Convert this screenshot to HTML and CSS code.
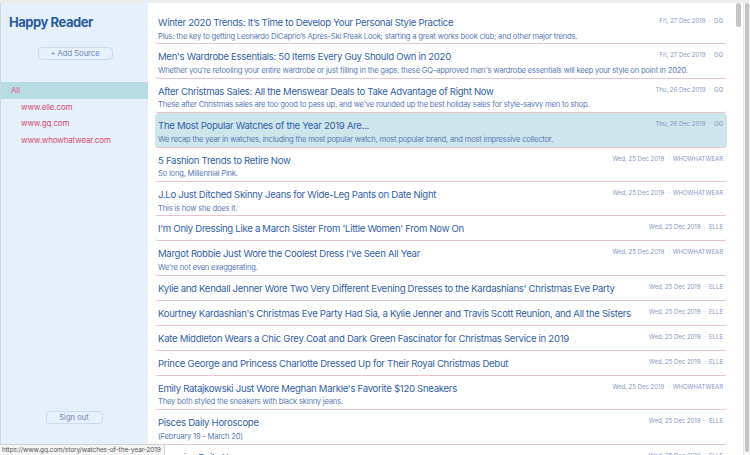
FILE: index.html
```html
<!DOCTYPE html>
<html>
<head>
<meta charset="utf-8">
<link rel="stylesheet" href="styles.css">
</head>
<body>
<div class="app">
  <aside class="sidebar">
    <h1 class="brand">Happy Reader</h1>
    <button class="btn add">+ Add Source</button>
    <ul class="sources">
      <li class="src all active">All</li>
      <li class="src">www.elle.com</li>
      <li class="src">www.gq.com</li>
      <li class="src">www.whowhatwear.com</li>
    </ul>
    <div class="spacer"></div>
    <button class="btn signout">Sign out</button>
  </aside>
  <main class="list">
    <div class="item"><div class="txt"><div class="title">Winter 2020 Trends: It’s Time to Develop Your Personal Style Practice</div><div class="desc">Plus: the key to getting Leonardo DiCaprio’s Après-Ski Freak Look; starting a great works book club; and other major trends.</div></div><div class="meta">Fri, 27 Dec 2019 &nbsp;·&nbsp; GQ</div></div>
    <div class="item"><div class="txt"><div class="title">Men's Wardrobe Essentials: 50 Items Every Guy Should Own in 2020</div><div class="desc">Whether you're retooling your entire wardrobe or just filling in the gaps, these GQ-approved men's wardrobe essentials will keep your style on point in 2020.</div></div><div class="meta">Fri, 27 Dec 2019 &nbsp;·&nbsp; GQ</div></div>
    <div class="item"><div class="txt"><div class="title">After Christmas Sales: All the Menswear Deals to Take Advantage of Right Now</div><div class="desc">These after Christmas sales are too good to pass up, and we've rounded up the best holiday sales for style-savvy men to shop.</div></div><div class="meta">Thu, 26 Dec 2019 &nbsp;·&nbsp; GQ</div></div>
    <div class="item selected"><div class="txt"><div class="title">The Most Popular Watches of the Year 2019 Are...</div><div class="desc">We recap the year in watches, including the most popular watch, most popular brand, and most impressive collector.</div></div><div class="meta">Thu, 26 Dec 2019 &nbsp;·&nbsp; GQ</div></div>
    <div class="item"><div class="txt"><div class="title">5 Fashion Trends to Retire Now</div><div class="desc">So long, Millennial Pink.</div></div><div class="meta">Wed, 25 Dec 2019 &nbsp;·&nbsp; WHOWHATWEAR</div></div>
    <div class="item"><div class="txt"><div class="title">J.Lo Just Ditched Skinny Jeans for Wide-Leg Pants on Date Night</div><div class="desc">This is how she does it.</div></div><div class="meta">Wed, 25 Dec 2019 &nbsp;·&nbsp; WHOWHATWEAR</div></div>
    <div class="item"><div class="txt"><div class="title">I'm Only Dressing Like a March Sister From 'Little Women' From Now On</div></div><div class="meta">Wed, 25 Dec 2019 &nbsp;·&nbsp; ELLE</div></div>
    <div class="item"><div class="txt"><div class="title">Margot Robbie Just Wore the Coolest Dress I've Seen All Year</div><div class="desc">We're not even exaggerating.</div></div><div class="meta">Wed, 25 Dec 2019 &nbsp;·&nbsp; WHOWHATWEAR</div></div>
    <div class="item"><div class="txt"><div class="title">Kylie and Kendall Jenner Wore Two Very Different Evening Dresses to the Kardashians' Christmas Eve Party</div></div><div class="meta">Wed, 25 Dec 2019 &nbsp;·&nbsp; ELLE</div></div>
    <div class="item"><div class="txt"><div class="title">Kourtney Kardashian's Christmas Eve Party Had Sia, a Kylie Jenner and Travis Scott Reunion, and All the Sisters</div></div><div class="meta">Wed, 25 Dec 2019 &nbsp;·&nbsp; ELLE</div></div>
    <div class="item"><div class="txt"><div class="title">Kate Middleton Wears a Chic Grey Coat and Dark Green Fascinator for Christmas Service in 2019</div></div><div class="meta">Wed, 25 Dec 2019 &nbsp;·&nbsp; ELLE</div></div>
    <div class="item"><div class="txt"><div class="title">Prince George and Princess Charlotte Dressed Up for Their Royal Christmas Debut</div></div><div class="meta">Wed, 25 Dec 2019 &nbsp;·&nbsp; ELLE</div></div>
    <div class="item"><div class="txt"><div class="title">Emily Ratajkowski Just Wore Meghan Markle's Favorite $120 Sneakers</div><div class="desc">They both styled the sneakers with black skinny jeans.</div></div><div class="meta">Wed, 25 Dec 2019 &nbsp;·&nbsp; WHOWHATWEAR</div></div>
    <div class="item"><div class="txt"><div class="title">Pisces Daily Horoscope</div><div class="desc">(February 19 - March 20)</div></div><div class="meta">Wed, 25 Dec 2019 &nbsp;·&nbsp; ELLE</div></div>
    <div class="item"><div class="txt"><div class="title">Aquarius Daily Horoscope</div><div class="desc">(January 20 - February 18)</div></div><div class="meta">Wed, 25 Dec 2019 &nbsp;·&nbsp; ELLE</div></div>
  </main>
  <div class="vscroll"><div class="vthumb"></div></div>
  <div class="pscroll"><div class="pthumb"></div></div>
</div>
<div class="status">https://www.gq.com/story/watches-of-the-year-2019</div>
</body>
</html>
```
FILE: styles.css
```css
* { box-sizing: border-box; }
html, body { margin: 0; padding: 0; }
body {
  width: 750px;
  height: 455px;
  overflow: hidden;
  font-family: Inter, "Noto Sans", sans-serif;
  background: #fff;
  border-top: 3px solid #ececec;
}
.app {
  display: flex;
  height: 452px;
}
.sidebar {
  width: 148px;
  flex: none;
  background: #e5f0fa;
  border-left: 1px solid #cfd7de;
  display: flex;
  flex-direction: column;
  align-items: center;
}
.brand {
  margin: 11px 0 0 0;
  align-self: flex-start;
  padding-left: 8px;
  font-size: 13px;
  letter-spacing: -0.45px;
  line-height: 16px;
  font-weight: 700;
  color: #2c5a9c;
}
.btn {
  font-family: inherit;
  font-size: 7.6px;
  line-height: 11px;
  color: #6a86b2;
  background: #e7f1fb;
  border: 1px solid #c9dcee;
  border-radius: 4px;
  padding: 0;
  height: 13px;
}
.add { width: 75px; margin-top: 17px; margin-left: 1px; }
.sources {
  list-style: none;
  margin: 22px 0 0 0;
  padding: 0;
  width: 100%;
}
.src {
  height: 16.7px;
  line-height: 16.7px;
  font-size: 8px;
  letter-spacing: -0.15px;
  color: #d64a72;
  padding-left: 20px;
}
.src.all { padding-left: 10px; color: #e0608a; }
.src.active { background: #b8dce3; }
.spacer { flex: 1; }
.signout { width: 57px; margin-bottom: 31px; margin-left: -1px; }

.list {
  flex: 1;
  padding: 7px 8px 0 7px;
  overflow: hidden;
}
.item {
  display: flex;
  align-items: flex-start;
  padding: 6px 4px 4px 3px;
  border-bottom: 1px solid #ecc3cc;
  border-bottom-left-radius: 3px;
  border-bottom-right-radius: 3px;
}
.item:has(.desc) { padding-bottom: 2px; }
.item.selected {
  background: #cde6eb;
  border-radius: 4px;
}
.txt { flex: 1; min-width: 0; }
.title {
  font-size: 9.6px;
  letter-spacing: -0.3px;
  line-height: 14px;
  color: #3460a8;
  white-space: nowrap;
}
.desc {
  font-size: 7.6px;
  letter-spacing: -0.2px;
  line-height: 9.7px;
  padding-top: 1.7px;
  color: #5a79b8;
  white-space: nowrap;
}
.meta {
  flex: none;
  font-size: 6px;
  line-height: 8px;
  color: #8598c2;
  padding-left: 10px;
  padding-top: 1px;
  white-space: nowrap;
}
.vscroll {
  width: 8px;
  flex: none;
  padding: 0 2px 0 1px;
  background: #fff;
}
.vthumb {
  height: 24px;
  background: #c4c4c4;
  border-radius: 3px;
}
.pscroll {
  width: 7px;
  flex: none;
  background: #f6f6f6;
  border-left: 1px solid #e8e8e8;
  padding: 0 1px;
}
.pthumb {
  height: 449px;
  background: #c2c2c2;
  border-radius: 3px;
}
.status {
  position: fixed;
  left: 0;
  bottom: 0;
  height: 11px;
  padding: 0 3px 0 2px;
  font-size: 6.5px;
  letter-spacing: -0.1px;
  line-height: 11px;
  color: #555;
  background: #f4f4f4;
  border-top: 1px solid #d2d2d2;
  border-right: 1px solid #d2d2d2;
  border-top-right-radius: 2px;
  font-family: Inter, "Noto Sans", sans-serif;
}
```
